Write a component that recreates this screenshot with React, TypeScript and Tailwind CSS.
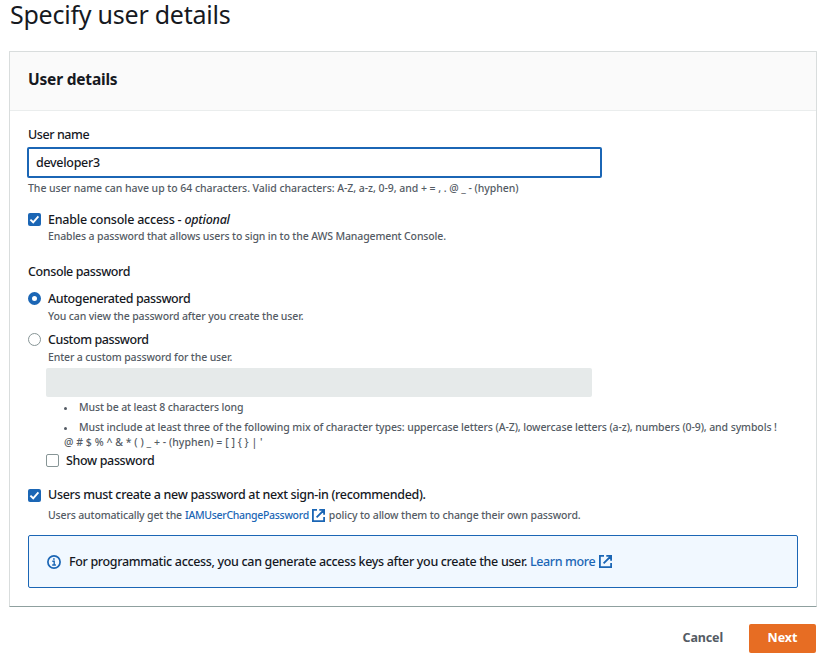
import React from "react";

function Check({ checked }: { checked?: boolean }) {
  return checked ? (
    <span className="flex h-[13px] w-[13px] shrink-0 items-center justify-center rounded-[2px] bg-[#1b66b5]">
      <svg width="13" height="13" viewBox="0 0 13 13" fill="none" stroke="#fff" strokeWidth="1.9">
        <path d="M2.4 6.6 5.2 9.3 10.4 3.4" />
      </svg>
    </span>
  ) : (
    <span className="mb-[2px] h-[13px] w-[13px] shrink-0 rounded-[2px] border border-[#879596] bg-white" />
  );
}

function Radio({ checked }: { checked?: boolean }) {
  return checked ? (
    <span className="h-[13px] w-[13px] shrink-0 rounded-full border-4 border-[#1b66b5] bg-white" />
  ) : (
    <span className="mt-px h-[13px] w-[13px] shrink-0 rounded-full border border-[#879596] bg-white" />
  );
}

function External() {
  return (
    <svg width="13" height="13" viewBox="0 0 13 13" fill="none" stroke="#1b66b5" strokeWidth="1.8" className="shrink-0">
      <path d="M5 .9H.9v11.2h11.2V8M7.3.9h4.8v4.8M12 1 4.6 8.4" />
    </svg>
  );
}

function Info() {
  return (
    <svg width="14" height="14" viewBox="0 0 14 14" fill="none" stroke="#1b66b5" className="shrink-0">
      <circle cx="7" cy="7" r="6.1" strokeWidth="1.7" />
      <path d="M5.3 6.3h1.9v3.6M5.2 10h3.7" strokeWidth="1.4" />
      <path d="M6.1 4h1.6" strokeWidth="1.6" />
    </svg>
  );
}

export default function App() {
  return (
    <main className="h-[657px] w-[829px] overflow-hidden whitespace-nowrap bg-white pl-[9px] font-['Noto_Sans','Open_Sans',sans-serif] text-[12.5px] font-medium leading-4 text-[#16191f]">
      <h1 className="h-[51px] pl-px text-[25px] font-normal leading-[29px] tracking-[-0.24px]">Specify user details</h1>
      <section className="flex h-[556px] w-[808px] flex-col rounded-[1px] border border-[#d9dddd] border-b-[#8fa09f]">
        <header className="flex h-[59px] shrink-0 items-center border-b border-[#eaeded] bg-[#fafafa] pb-[5px] pl-[18px]">
          <h2 className="text-[15.5px] font-bold leading-5 tracking-[-0.2px]">User details</h2>
        </header>
        <div className="flex flex-col px-[18px] pt-4">
          <label className="h-4"><span className="tracking-[-0.42px]">User name</span></label>
          <div className="-ml-px mt-1 flex h-[31px] w-[575px] items-center rounded-[2px] border-2 border-[#1b66b5] pl-[7px]">
            <span className="tracking-[-0.3px]">developer3</span>
          </div>
          <p className="mt-[2px] h-4 text-[10.5px] text-[#545b64]"><span className="tracking-[-0.05px]">The user name can have up to 64 characters. Valid characters: A-Z, a-z, 0-9, and + = , . @ _ - (hyphen)</span></p>
          <div className="mt-[15px] flex h-4 items-center gap-[7px]"><Check checked /><span className="pt-[2px] tracking-[-0.23px]">Enable console access - <em>optional</em></span></div>
          <p className="mt-px h-4 pl-5 text-[10.5px] text-[#545b64]"><span className="tracking-[-0.135px]">Enables a password that allows users to sign in to the AWS Management Console.</span></p>
          <p className="mt-5 h-4"><span className="tracking-[-0.4px]">Console password</span></p>
          <div className="mt-[10px] flex h-4 items-center gap-[7px]"><Radio checked /><span className="pt-[2px] tracking-[-0.4px]">Autogenerated password</span></div>
          <p className="mt-[2px] h-4 pl-5 text-[10.5px] text-[#545b64]"><span className="tracking-[-0.14px]">You can view the password after you create the user.</span></p>
          <div className="mt-[7px] flex h-4 items-center gap-[7px]"><Radio /><span className="pt-[2px] tracking-[-0.42px]">Custom password</span></div>
          <p className="mt-[2px] h-4 pl-5 text-[10.5px] text-[#545b64]"><span className="tracking-[-0.14px]">Enter a custom password for the user.</span></p>
          <div className="ml-[18px] mt-[3px] h-[29px] w-[546px] rounded-[2px] bg-[#e6eaea]" />
          <ul className="ml-9 mt-[2px] text-[10.5px] text-[#545b64]">
            <li className="flex h-4 items-center"><i className="mr-3 mt-[2px] h-[3px] w-[3px] rounded-full bg-[#545b64]" /><span className="tracking-[-0.15px]">Must be at least 8 characters long</span></li>
            <li className="mt-1 flex h-4 items-center"><i className="mr-3 mt-[2px] h-[3px] w-[3px] rounded-full bg-[#545b64]" /><span className="tracking-[-0.1px]">Must include at least three of the following mix of character types: uppercase letters (A-Z), lowercase letters (a-z), numbers (0-9), and symbols !</span></li>
            <li className="-mt-px h-4"><span className="tracking-[0.04px]">{"@ # $ % ^ & * ( ) _ + - (hyphen) = [ ] { } | '"}</span></li>
          </ul>
          <div className="ml-[18px] mt-[3px] flex h-4 items-center gap-[7px]"><Check /><span className="tracking-[-0.35px]">Show password</span></div>
          <div className="mt-[18px] flex h-4 items-center gap-[7px]"><Check checked /><span className="tracking-[-0.32px]">Users must create a new password at next sign-in (recommended).</span></div>
          <p className="mt-1 flex h-4 items-center pl-5 text-[10.5px] text-[#545b64]">
            <span className="mr-[3px] tracking-[-0.15px]">Users automatically get the</span>
            <a className="mr-[3px] tracking-[-0.3px] text-[#1b66b5]">IAMUserChangePassword</a>
            <External />
            <span className="ml-1 tracking-[-0.13px]">policy to allow them to change their own password.</span>
          </p>
          <aside className="mt-3 flex h-[53px] w-[770px] items-center rounded-[2px] border border-[#1b66b5] bg-[#f1f8ff] pl-[18px]">
            <Info />
            <span className="ml-2 tracking-[-0.335px]">For programmatic access, you can generate access keys after you create the user.</span>
            <a className="ml-[3px] mr-1 tracking-[-0.38px] text-[#1b66b5]">Learn more</a>
            <External />
          </aside>
        </div>
      </section>
      <footer className="mt-[17px] flex h-[29px] w-[807px] items-center justify-end text-[12.5px] font-bold">
        <button className="mr-[26px] pb-[2px] tracking-[-0.15px] text-[#545b64]">Cancel</button>
        <button className="h-[29px] w-[67px] rounded-[2px] bg-[#e76d23] pb-[2px] text-white">Next</button>
      </footer>
    </main>
  );
}
